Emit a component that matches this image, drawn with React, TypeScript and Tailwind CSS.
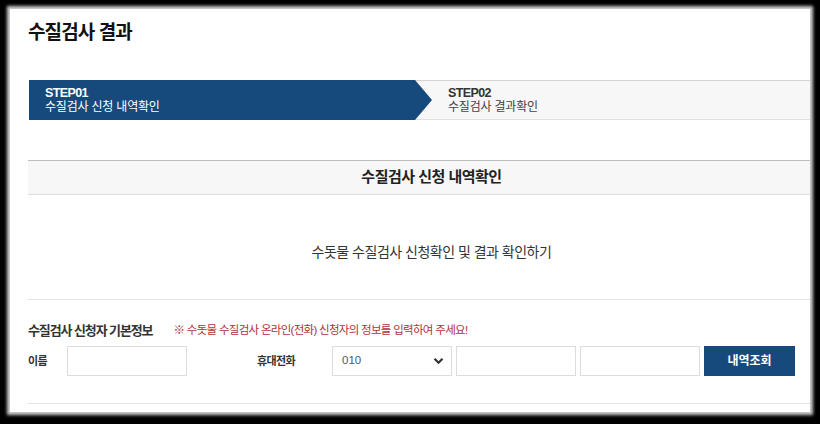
import React from "react";

const FONT = { fontFamily: '"Liberation Sans", "Noto Sans CJK KR", sans-serif' };

function Chevron() {
  return (
    <svg width="11" height="8" viewBox="0 0 11 8" className="pointer-events-none absolute right-[8px] top-[11px]">
      <path d="M1.5 1.8 L5.5 5.8 L9.5 1.8" fill="none" stroke="#333" strokeWidth="2.2" />
    </svg>
  );
}

export default function App() {
  return (
    <div className="w-[820px] h-[424px] bg-black overflow-hidden pt-[9px]" style={FONT}>
      <div className="ml-[10px] w-[800px] h-[403px] bg-white overflow-hidden shadow-[0_0_3px_3px_rgba(205,205,205,1)]">
        <div className="pl-[18px] pt-[10px] w-[825px]">
          <h1 className="h-[28px] leading-[28px] text-[19px] font-bold text-[#111] tracking-[-0.9px]">
            수질검사 결과
          </h1>

          {/* Steps */}
          <div className="mt-[33px] ml-px h-[40px] flex bg-[#f7f7f7] border-t border-b border-t-[#d4d4d4] border-b-[#e0e0e0]">
            <div className="-my-px w-[403px] h-[40px] bg-[#174a7c] text-white pl-[16px] flex flex-col justify-center [clip-path:polygon(0_0,386px_0,403px_50%,386px_100%,0_100%)]">
              <div className="text-[12.5px] leading-[14px] font-bold tracking-[-0.6px]">STEP01</div>
              <div className="text-[12px] leading-[15px] tracking-[-0.2px]">수질검사 신청 내역확인</div>
            </div>
            <div className="pl-[16px] flex flex-col justify-center text-[#333]">
              <div className="text-[12.5px] leading-[14px] font-bold tracking-[-0.6px]">STEP02</div>
              <div className="text-[12px] leading-[15px] tracking-[-0.2px] text-[#444]">수질검사 결과확인</div>
            </div>
          </div>

          {/* Section header */}
          <div className="mt-[40px] h-[35px] bg-[#f7f7f7] border-t border-b border-t-[#bdbdbd] border-b-[#dedede] flex items-center justify-center">
            <span className="text-[15px] font-bold text-[#222] tracking-[-0.5px]">수질검사 신청 내역확인</span>
          </div>

          <div className="h-[104px] pt-[10px] flex items-center justify-center">
            <span className="text-[14px] text-[#333] tracking-[-0.5px]">수돗물 수질검사 신청확인 및 결과 확인하기</span>
          </div>

          {/* Form */}
          <div className="border-t border-[#e3e3e3] pt-[21px] pb-[27px] border-b">
            <div className="h-[20px] flex items-center">
              <span className="text-[13px] font-bold text-[#333] tracking-[-1.1px]">수질검사 신청자 기본정보</span>
              <span className="ml-[21px] text-[11.5px] text-[#b0323a] tracking-[-0.7px]">
                ※ 수돗물 수질검사 온라인(전화) 신청자의 정보를 입력하여 주세요!
              </span>
            </div>
            <div className="mt-[5px] h-[30px] flex items-center">
              <label className="w-[39px] text-[11px] font-bold text-[#333] tracking-[-0.5px]">이름</label>
              <input className="w-[120px] h-[30px] border border-[#dcdcdc] bg-white outline-none" />
              <label className="ml-[70px] w-[75px] text-[11px] font-bold text-[#333] tracking-[-0.6px]">휴대전화</label>
              <div className="relative w-[120px] h-[30px]">
                <select className="appearance-none w-full h-full border border-[#dcdcdc] bg-white pl-[9px] text-[11.5px] text-[#555] outline-none" defaultValue="010">
                  <option value="010">010</option>
                  <option value="011">011</option>
                  <option value="016">016</option>
                  <option value="017">017</option>
                  <option value="018">018</option>
                  <option value="019">019</option>
                </select>
                <Chevron />
              </div>
              <input className="ml-[4px] w-[120px] h-[30px] border border-[#dcdcdc] bg-white outline-none" />
              <input className="ml-[4px] w-[120px] h-[30px] border border-[#dcdcdc] bg-white outline-none" />
              <button className="ml-[4px] w-[91px] h-[30px] bg-[#174a7c] text-white text-[12px] font-bold">
                내역조회
              </button>
            </div>
          </div>
        </div>
      </div>
    </div>
  );
}
